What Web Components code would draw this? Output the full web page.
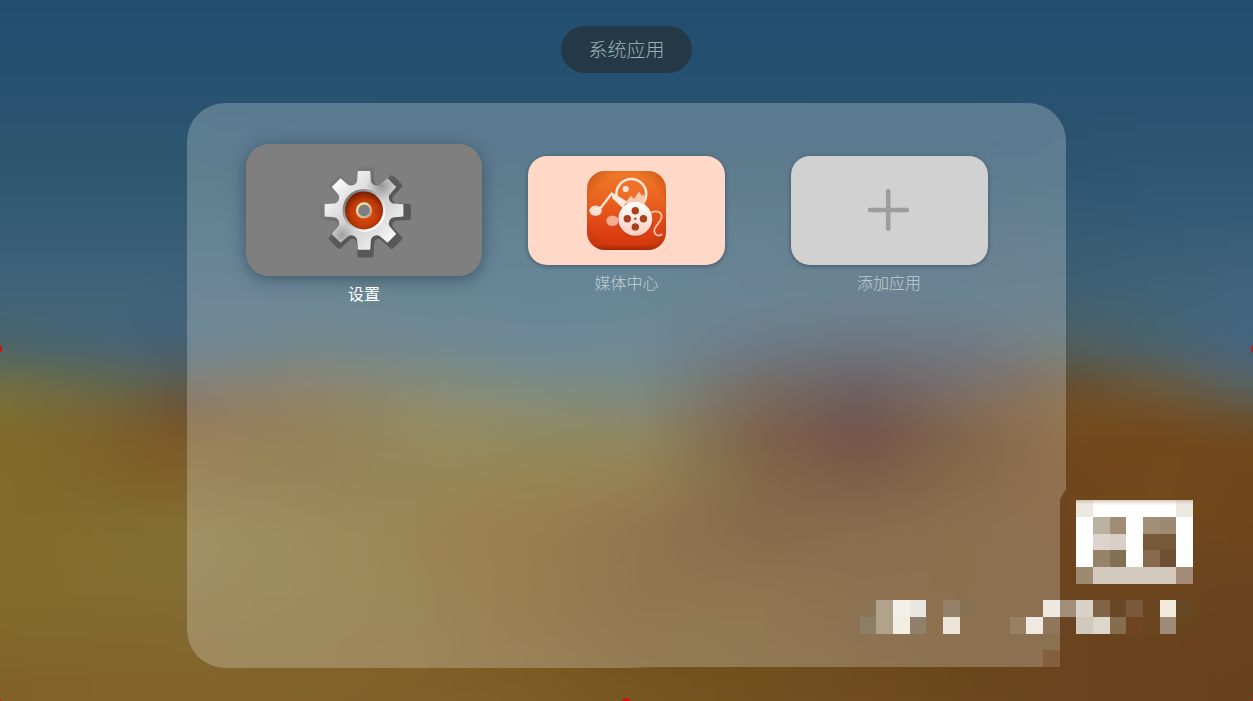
<!DOCTYPE html>
<html lang="zh-CN">
<head>
<meta charset="utf-8">
<title>系统应用</title>
<style>
    html, body {
        margin: 0;
        height: 100%;
        overflow: hidden;
    }
    body {
        font-family: "Noto Sans CJK SC", "Noto Sans", sans-serif;
        background: #24506f;
    }
</style>
</head>
<body>
<launcher-screen>
    <title-pill slot="title">系统应用</title-pill>
    <app-panel>
        <app-tile color="#7f7f7f" focused><gear-icon slot="icon"></gear-icon>设置</app-tile>
        <app-tile color="#ffd8c8"><media-icon slot="icon"></media-icon>媒体中心</app-tile>
        <app-tile color="#d1d1d1"><plus-icon slot="icon"></plus-icon>添加应用</app-tile>
    </app-panel>
    <pixel-mosaic slot="overlay"></pixel-mosaic>
    <edge-marks slot="overlay"></edge-marks>
</launcher-screen>

<script>
class LauncherScreen extends HTMLElement {
    constructor() {
        super();
        this.attachShadow({mode: 'open'});
        this.shadowRoot.innerHTML = `
            <style>
                :host {
                    display: block;
                    position: relative;
                    width: 1253px;
                    height: 701px;
                    overflow: hidden;
                }
                main {
                    position: relative;
                    display: flex;
                    flex-direction: column;
                    align-items: center;
                    gap: 30px;
                    padding-top: 26px;
                }
            </style>
            <blurred-wallpaper></blurred-wallpaper>
            <main>
                <slot name="title"></slot>
                <slot></slot>
            </main>
            <slot name="overlay"></slot>
        `;
    }
}

// Wallpaper: every row is a horizontal gradient that fades in over the one above it.
// It bleeds 40px past the screen so that the blur has no pale border.
class BlurredWallpaper extends HTMLElement {
    constructor() {
        super();
        this.bleed = 40;
        this.attachShadow({mode: 'open'});
        this.shadowRoot.innerHTML = `
            <style>
                :host {
                    display: block;
                    position: absolute;
                    inset: -${this.bleed}px;
                    filter: blur(13px);
                }
                .rows {
                    display: grid;
                    height: 100%;
                }
                .rows div {
                    grid-area: 1 / 1;
                }
            </style>
            <div class="rows">${this.getRows()}</div>
        `;
    }

    getRows() {
        const stops = [0, 125, 187, 313, 440, 540, 640, 760, 860, 960, 1066, 1160, 1253];
        const rows = [
            [0, '224d6f 224d6f 224d6f 224d6f 224d6f 224d6f 224d6f 224d6f 224d6f 224d6f 224d6f 224d6f 224d6f'],
            [50, '245071 245071 245071 245071 245071 245071 245071 245071 245071 245071 245071 245071 245071'],
            [100, '285270 285270 285270 285270 285270 285270 285270 285270 285270 285270 285270 285270 285270'],
            [150, '2d566e 2d566e 2d566e 2c536e 2c526d 2b526d 2b526d 2b526c 2b516c 2b516c 2d5470 2e5672 2e5672'],
            [200, '325a71 325a71 325a71 325870 32586f 32586e 32586e 32576d 32566c 32566c 325872 325a74 325a74'],
            [250, '3a6078 3a6078 3a6077 385f75 365e74 365f74 365f74 385d73 3a5b70 3a5b71 3a5d72 3a5e76 3c6078'],
            [300, '44647a 44647a 41627a 406276 3c6276 3a6276 3c6276 3f5f74 3f5d72 3e5e74 416072 426476 446580'],
            [344, '48646a 466478 446276 47636b 456472 42647a 436576 3f5466 414e59 44515e 50605f 4a6470 446480'],
            [382, '706f46 606650 5c5c50 695f47 5c6954 516961 4e6663 4c413a 41343a 4e4444 634e32 685c44 566468'],
            [407, '7c7036 74623c 6c5236 705e32 6e6941 666949 5e664c 543a27 432823 5c3f2a 744e22 72522c 625842'],
            [435, '806c2a 7d602a 7a5828 765c27 76692e 6c6632 6e6332 563215 481f14 593715 724a1c 72481a 704a20'],
            [475, '826c2c 7e622a 80602a 785e25 786322 78611f 765c1d 5c3a12 542c12 613c12 70461c 74481c 72461a'],
            [530, '826c2c 826e30 847034 80692a 7d5e1f 7b561a 704c18 613f15 664118 694418 6e461e 70481e 70461c'],
            [600, '826c2c 826c30 826c32 81692b 7d6122 78561a 6f4e1a 6e4e1a 6a481d 694418 6a441e 6a441e 69431f'],
            [701, '806028 82622a 82622a 82622a 80602c 7c5c28 765624 705220 704c20 6c481e 69441e 68421d 67401d'],
        ];
        const b = this.bleed;
        return rows.map(([y, colors], i) => {
            const list = colors.split(' ').map((c, n) => `#${c} ${stops[n] + b}px`).join(', ');
            const mask = i ? `mask-image: linear-gradient(transparent ${rows[i - 1][0] + b}px, #000 ${y + b}px);` : '';
            return `<div style="background: linear-gradient(90deg, ${list}); ${mask}"></div>`;
        }).join('');
    }
}

class TitlePill extends HTMLElement {
    constructor() {
        super();
        this.attachShadow({mode: 'open'});
        this.shadowRoot.innerHTML = `
            <style>
                :host {
                    display: flex;
                    align-items: center;
                    justify-content: center;
                    box-sizing: border-box;
                    width: 131px;
                    height: 47px;
                    padding-bottom: 2px;
                    border-radius: 24px;
                    background: #243947;
                    color: #a3afb7;
                    font-size: 19px;
                    font-weight: 300;
                    line-height: 1;
                }
            </style>
            <slot></slot>
        `;
    }
}

class AppPanel extends HTMLElement {
    constructor() {
        super();
        this.attachShadow({mode: 'open'});
        this.shadowRoot.innerHTML = `
            <style>
                :host {
                    display: grid;
                    grid-template-columns: repeat(3, 197px);
                    column-gap: 65.5px;
                    align-content: start;
                    box-sizing: border-box;
                    width: 879px;
                    height: 565px;
                    padding: 52.5px 78.5px 0;
                    border-radius: 38px 38px 0 38px;
                    background: rgba(255, 255, 255, 0.235);
                    clip-path: path("M0 0H879V386L873 396V564H470L440 565H0Z");
                }
            </style>
            <slot></slot>
        `;
    }
}

class AppTile extends HTMLElement {
    constructor() {
        super();
        this.attachShadow({mode: 'open'});
        this.color = this.getAttribute('color') || '#d1d1d1';
        this.shadowRoot.innerHTML = `
            <style>
                :host {
                    display: flex;
                    flex-direction: column;
                    align-items: center;
                    color: #c0ced7;
                    font-size: 16px;
                    font-weight: 300;
                    line-height: 16px;
                }
                .card {
                    display: flex;
                    align-items: center;
                    justify-content: center;
                    width: 197px;
                    height: 109.5px;
                    border-radius: 19px;
                    background: ${this.color};
                    box-shadow: 0 1px 4px rgba(25, 45, 60, 0.5);
                }
                .label {
                    margin-top: 9px;
                }
                :host([focused]) {
                    color: #fff;
                    font-weight: 400;
                }
                :host([focused]) .card {
                    width: 236px;
                    height: 132px;
                    margin: -11.5px -20px 0;
                    border-radius: 23px;
                    box-shadow: 0 3px 16px rgba(25, 45, 60, 0.5);
                }
            </style>
            <div class="card"><slot name="icon"></slot></div>
            <div class="label"><slot></slot></div>
        `;
    }
}

class GearIcon extends HTMLElement {
    constructor() {
        super();
        this.attachShadow({mode: 'open'});
        this.shadowRoot.innerHTML = `
            <style>
                :host {
                    display: block;
                    width: 100px;
                    height: 100px;
                }
            </style>
            <svg width="100" height="100" viewBox="-50 -50.4 100 100">
                <defs>
                    <linearGradient id="steel" x1="0" y1="0" x2="1" y2="1">
                        <stop offset="0.12" stop-color="#fff"/>
                        <stop offset="0.3" stop-color="#e4e4e4"/>
                        <stop offset="0.5" stop-color="#cdcdcd"/>
                        <stop offset="0.68" stop-color="#dedede"/>
                        <stop offset="0.85" stop-color="#f6f6f6"/>
                    </linearGradient>
                    <radialGradient id="shine" gradientUnits="userSpaceOnUse" cx="17" cy="-25" r="15">
                        <stop offset="0" stop-color="#555" stop-opacity="0.5"/>
                        <stop offset="1" stop-color="#777" stop-opacity="0"/>
                    </radialGradient>
                    <radialGradient id="shine2" gradientUnits="userSpaceOnUse" cx="-22" cy="25" r="13">
                        <stop offset="0" stop-color="#555" stop-opacity="0.4"/>
                        <stop offset="1" stop-color="#777" stop-opacity="0"/>
                    </radialGradient>
                    <linearGradient id="shade" gradientUnits="userSpaceOnUse" x1="-20" y1="-20" x2="0" y2="0">
                        <stop offset="0" stop-color="#787878"/>
                        <stop offset="1" stop-color="#585858"/>
                    </linearGradient>
                    <linearGradient id="rim" x1="0" y1="0" x2="1" y2="1">
                        <stop offset="0.15" stop-color="#777"/>
                        <stop offset="0.5" stop-color="#c4c0c0"/>
                        <stop offset="0.8" stop-color="#fff"/>
                    </linearGradient>
                    <radialGradient id="lens" cx="0.52" cy="0.58" r="0.58">
                        <stop offset="0.3" stop-color="#d4480f"/>
                        <stop offset="0.65" stop-color="#bb3808"/>
                        <stop offset="1" stop-color="#701c06"/>
                    </radialGradient>
                    <linearGradient id="ring" x1="0" y1="0" x2="1" y2="1">
                        <stop offset="0.2" stop-color="#f3e7b4"/>
                        <stop offset="1" stop-color="#c09a86"/>
                    </linearGradient>
                </defs>
                <path d="${this.getGear(43.4, 6, 30.8, 6.8)}" transform="translate(1.5 1.6)" fill="url(#shade)" stroke="url(#shade)" stroke-width="4" stroke-linejoin="round"/>
                <path d="${this.getGear(39.4, 6.2, 31, 6.8)}" fill="url(#steel)"/>
                <path d="${this.getGear(39.4, 6.2, 31, 6.8)}" fill="url(#shine)"/>
                <path d="${this.getGear(39.4, 6.2, 31, 6.8)}" fill="url(#shine2)"/>
                <circle r="21.5" fill="url(#rim)"/>
                <circle r="19" fill="url(#lens)"/>
                <circle r="7" fill="#7f7f7f" stroke="url(#ring)" stroke-width="2.2"/>
            </svg>
        `;
    }

    // eight teeth, with a round notch between each pair
    getGear(tip, tipHalf, base, baseHalf) {
        const points = [];
        for (let i = 0; i < 8; i++) {
            const a = i * Math.PI / 4;
            const turn = (x, y) => {
                const px = x * Math.cos(a) - y * Math.sin(a);
                const py = x * Math.sin(a) + y * Math.cos(a);
                return px.toFixed(2) + ' ' + py.toFixed(2);
            };
            points.push((i ? 'A6 6 0 0 0 ' : 'M') + turn(-baseHalf, -base));
            points.push('L' + turn(-tipHalf, -tip));
            points.push('L' + turn(tipHalf, -tip));
            points.push('L' + turn(baseHalf, -base));
        }
        return points.join('') + `A6 6 0 0 0 ${-baseHalf} ${-base}Z`;
    }
}

class MediaIcon extends HTMLElement {
    constructor() {
        super();
        this.attachShadow({mode: 'open'});
        this.shadowRoot.innerHTML = `
            <style>
                :host {
                    display: block;
                    width: 79px;
                    height: 79px;
                }
                svg {
                    display: block;
                }
            </style>
            <svg width="79" height="79" viewBox="0 0 79 79">
                <defs>
                    <linearGradient id="plate" x1="0" y1="0" x2="0" y2="1">
                        <stop offset="0" stop-color="#ee7a28"/>
                        <stop offset="0.35" stop-color="#ea6420"/>
                        <stop offset="0.7" stop-color="#e04416"/>
                        <stop offset="0.93" stop-color="#d6380e"/>
                        <stop offset="1" stop-color="#9c2806"/>
                    </linearGradient>
                    <radialGradient id="edge" cx="0.5" cy="0.5" r="0.72">
                        <stop offset="0.65" stop-color="#a83208" stop-opacity="0"/>
                        <stop offset="1" stop-color="#a02a05" stop-opacity="0.6"/>
                    </radialGradient>
                    <linearGradient id="reel" x1="0" y1="0" x2="0" y2="1">
                        <stop offset="0" stop-color="#fff"/>
                        <stop offset="1" stop-color="#ffcdbf"/>
                    </linearGradient>
                </defs>
                <rect width="79" height="79" rx="18" fill="url(#plate)"/>
                <rect width="79" height="79" rx="18" fill="url(#edge)"/>
                <circle cx="44.3" cy="23" r="14.9" fill="#f07a35" fill-opacity="0.4" stroke="#ffe6dc" stroke-width="2.5"/>
                <circle cx="38.7" cy="18" r="3.1" fill="#ffe2d6"/>
                <path d="M39 31L44 24.5L47 28L52 20.5L55 25L57 23L58 27L56 34H40Z" fill="#ffc9b0"/>
                <path d="M13.2 37.5L24.7 22.5" stroke="#ffe9e0" stroke-width="2.2"/>
                <path d="M23.8 20.8L40 30.5L35.5 36.5L25.5 27.5Z" fill="#ffe9e0"/>
                <ellipse cx="8.6" cy="39.6" rx="6.2" ry="5.2" fill="#ffe2d6"/>
                <ellipse cx="25.5" cy="49.7" rx="6.2" ry="5.3" fill="#f9ab90"/>
                <path d="M64.5 41.4C69.5 39 75.5 41 74.5 46.5C73.5 52 67 55 67.3 60C67.7 64.6 71.5 65.4 74.8 63.4" fill="none" stroke="#ffc2ac" stroke-width="1.7" stroke-linecap="round"/>
                <circle cx="48.3" cy="48.4" r="17.6" fill="#9a2c08" fill-opacity="0.35"/>
                <circle cx="48.3" cy="47.7" r="17" fill="url(#reel)"/>
                <g fill="#a8401c">
                    <circle cx="48.3" cy="39.7" r="3.7"/>
                    <circle cx="40.3" cy="47.7" r="3.7"/>
                    <circle cx="56.4" cy="47.7" r="3.7"/>
                    <circle cx="48.3" cy="55.9" r="3.7"/>
                    <circle cx="48.3" cy="47.7" r="1.2"/>
                </g>
            </svg>
        `;
    }
}

class PlusIcon extends HTMLElement {
    constructor() {
        super();
        this.attachShadow({mode: 'open'});
        this.shadowRoot.innerHTML = `
            <style>
                :host {
                    display: block;
                    width: 42px;
                    height: 42px;
                }
                svg {
                    display: block;
                }
            </style>
            <svg width="42" height="42" viewBox="0 0 42 42">
                <path d="M20.2 2.3V39.7M1.9 21H38.9" fill="none" stroke="#9d9d9d" stroke-width="4.6" stroke-linecap="round"/>
            </svg>
        `;
    }
}

// Privacy mosaic in the lower right corner, on a grid of 16.67px cells.
class PixelMosaic extends HTMLElement {
    constructor() {
        super();
        this.attachShadow({mode: 'open'});
        this.shadowRoot.innerHTML = `
            <style>
                :host {
                    display: block;
                    position: absolute;
                    left: 860px;
                    top: 500px;
                }
                svg {
                    display: block;
                }
            </style>
            <svg width="334" height="168" shape-rendering="crispEdges">
                <defs>
                    <linearGradient id="fade" x1="0" y1="0" x2="0" y2="1">
                        <stop offset="0" stop-color="#a8917c" stop-opacity="0.5"/>
                        <stop offset="1" stop-color="#fff" stop-opacity="0"/>
                    </linearGradient>
                </defs>
                ${this.getCells()}
                <rect x="216" y="0" width="117" height="7" fill="url(#fade)"/>
            </svg>
        `;
    }

    getCells() {
        // column, row, colour, columns spanned, rows spanned
        const cells = [
            [13, 0, '#ede8e1'], [14, 0, '#fffefc', 5], [19, 0, '#ede9e0'],
            [13, 1, '#fff', 1, 3], [16, 1, '#fffefc', 1, 3], [19, 1, '#fff', 1, 3],
            [14, 1, '#bab1a0'], [15, 1, '#a18c75'], [17, 1, '#a38f78'], [18, 1, '#9e8a72'],
            [14, 2, '#ddd5cd'], [15, 2, '#d8cfc6'], [17, 2, '#775839'], [18, 2, '#755a3a'],
            [14, 3, '#97836a'], [15, 3, '#827052'], [17, 3, '#886a4e'], [18, 3, '#6f5032'],
            [13, 4, '#9c8970'], [14, 4, '#d4c9bd', 5], [19, 4, '#a38a77'],
            [0, 6, '#8b7453'], [1, 6, '#b1a28b', 1, 2], [2, 6, '#f3f0e9'], [3, 6, '#eae6e0'],
            [5, 6, '#978068'], [6, 6, '#877152'], [11, 6, '#ede8e0'], [12, 6, '#a28e78'],
            [13, 6, '#dad2c9'], [14, 6, '#816446'], [15, 6, '#694828'], [16, 6, '#78593c'],
            [17, 6, '#694423'], [18, 6, '#f1eadb'], [19, 6, '#674928'],
            [0, 7, '#8d7f65'], [2, 7, '#f2eee2'], [3, 7, '#908069'], [5, 7, '#ebe4d8'],
            [6, 7, '#8d7050'], [9, 7, '#978064'], [10, 7, '#efeae1'], [11, 7, '#90775b'],
            [12, 7, '#684423'], [13, 7, '#d1c9be'], [14, 7, '#ddd6ca'], [15, 7, '#866d4d'],
            [16, 7, '#6e4520'], [17, 7, '#68451e'], [18, 7, '#9d8b75'], [19, 7, '#68441d'],
            [11, 9, '#835f3c'],
        ];
        const size = 50 / 3;
        return cells.map(([col, row, color, w = 1, h = 1]) => {
            const x = Math.floor(col * size + 0.01);
            const y = Math.ceil(row * size - 0.01);
            const right = Math.floor((col + w) * size + 0.01);
            const bottom = Math.ceil((row + h) * size - 0.01);
            return `<rect x="${x}" y="${y}" width="${right - x}" height="${bottom - y}" fill="${color}"/>`;
        }).join('');
    }
}

// Small red handles that show at the edges of the screen.
class EdgeMarks extends HTMLElement {
    constructor() {
        super();
        this.attachShadow({mode: 'open'});
        this.shadowRoot.innerHTML = `
            <style>
                :host {
                    display: block;
                    position: absolute;
                    inset: 0;
                }
            </style>
            <svg width="1253" height="701" fill="#d01010">
                <circle cx="-2.5" cy="349" r="4.5"/>
                <circle cx="1255.5" cy="349" r="4.5"/>
                <circle cx="626" cy="702.5" r="4.5"/>
                <circle cx="-1.5" cy="702.5" r="3.5"/>
                <circle cx="1254.5" cy="702.5" r="3.5"/>
            </svg>
        `;
    }
}

customElements.define('blurred-wallpaper', BlurredWallpaper);
customElements.define('launcher-screen', LauncherScreen);
customElements.define('title-pill', TitlePill);
customElements.define('app-panel', AppPanel);
customElements.define('app-tile', AppTile);
customElements.define('gear-icon', GearIcon);
customElements.define('media-icon', MediaIcon);
customElements.define('plus-icon', PlusIcon);
customElements.define('pixel-mosaic', PixelMosaic);
customElements.define('edge-marks', EdgeMarks);
</script>
</body>
</html>
